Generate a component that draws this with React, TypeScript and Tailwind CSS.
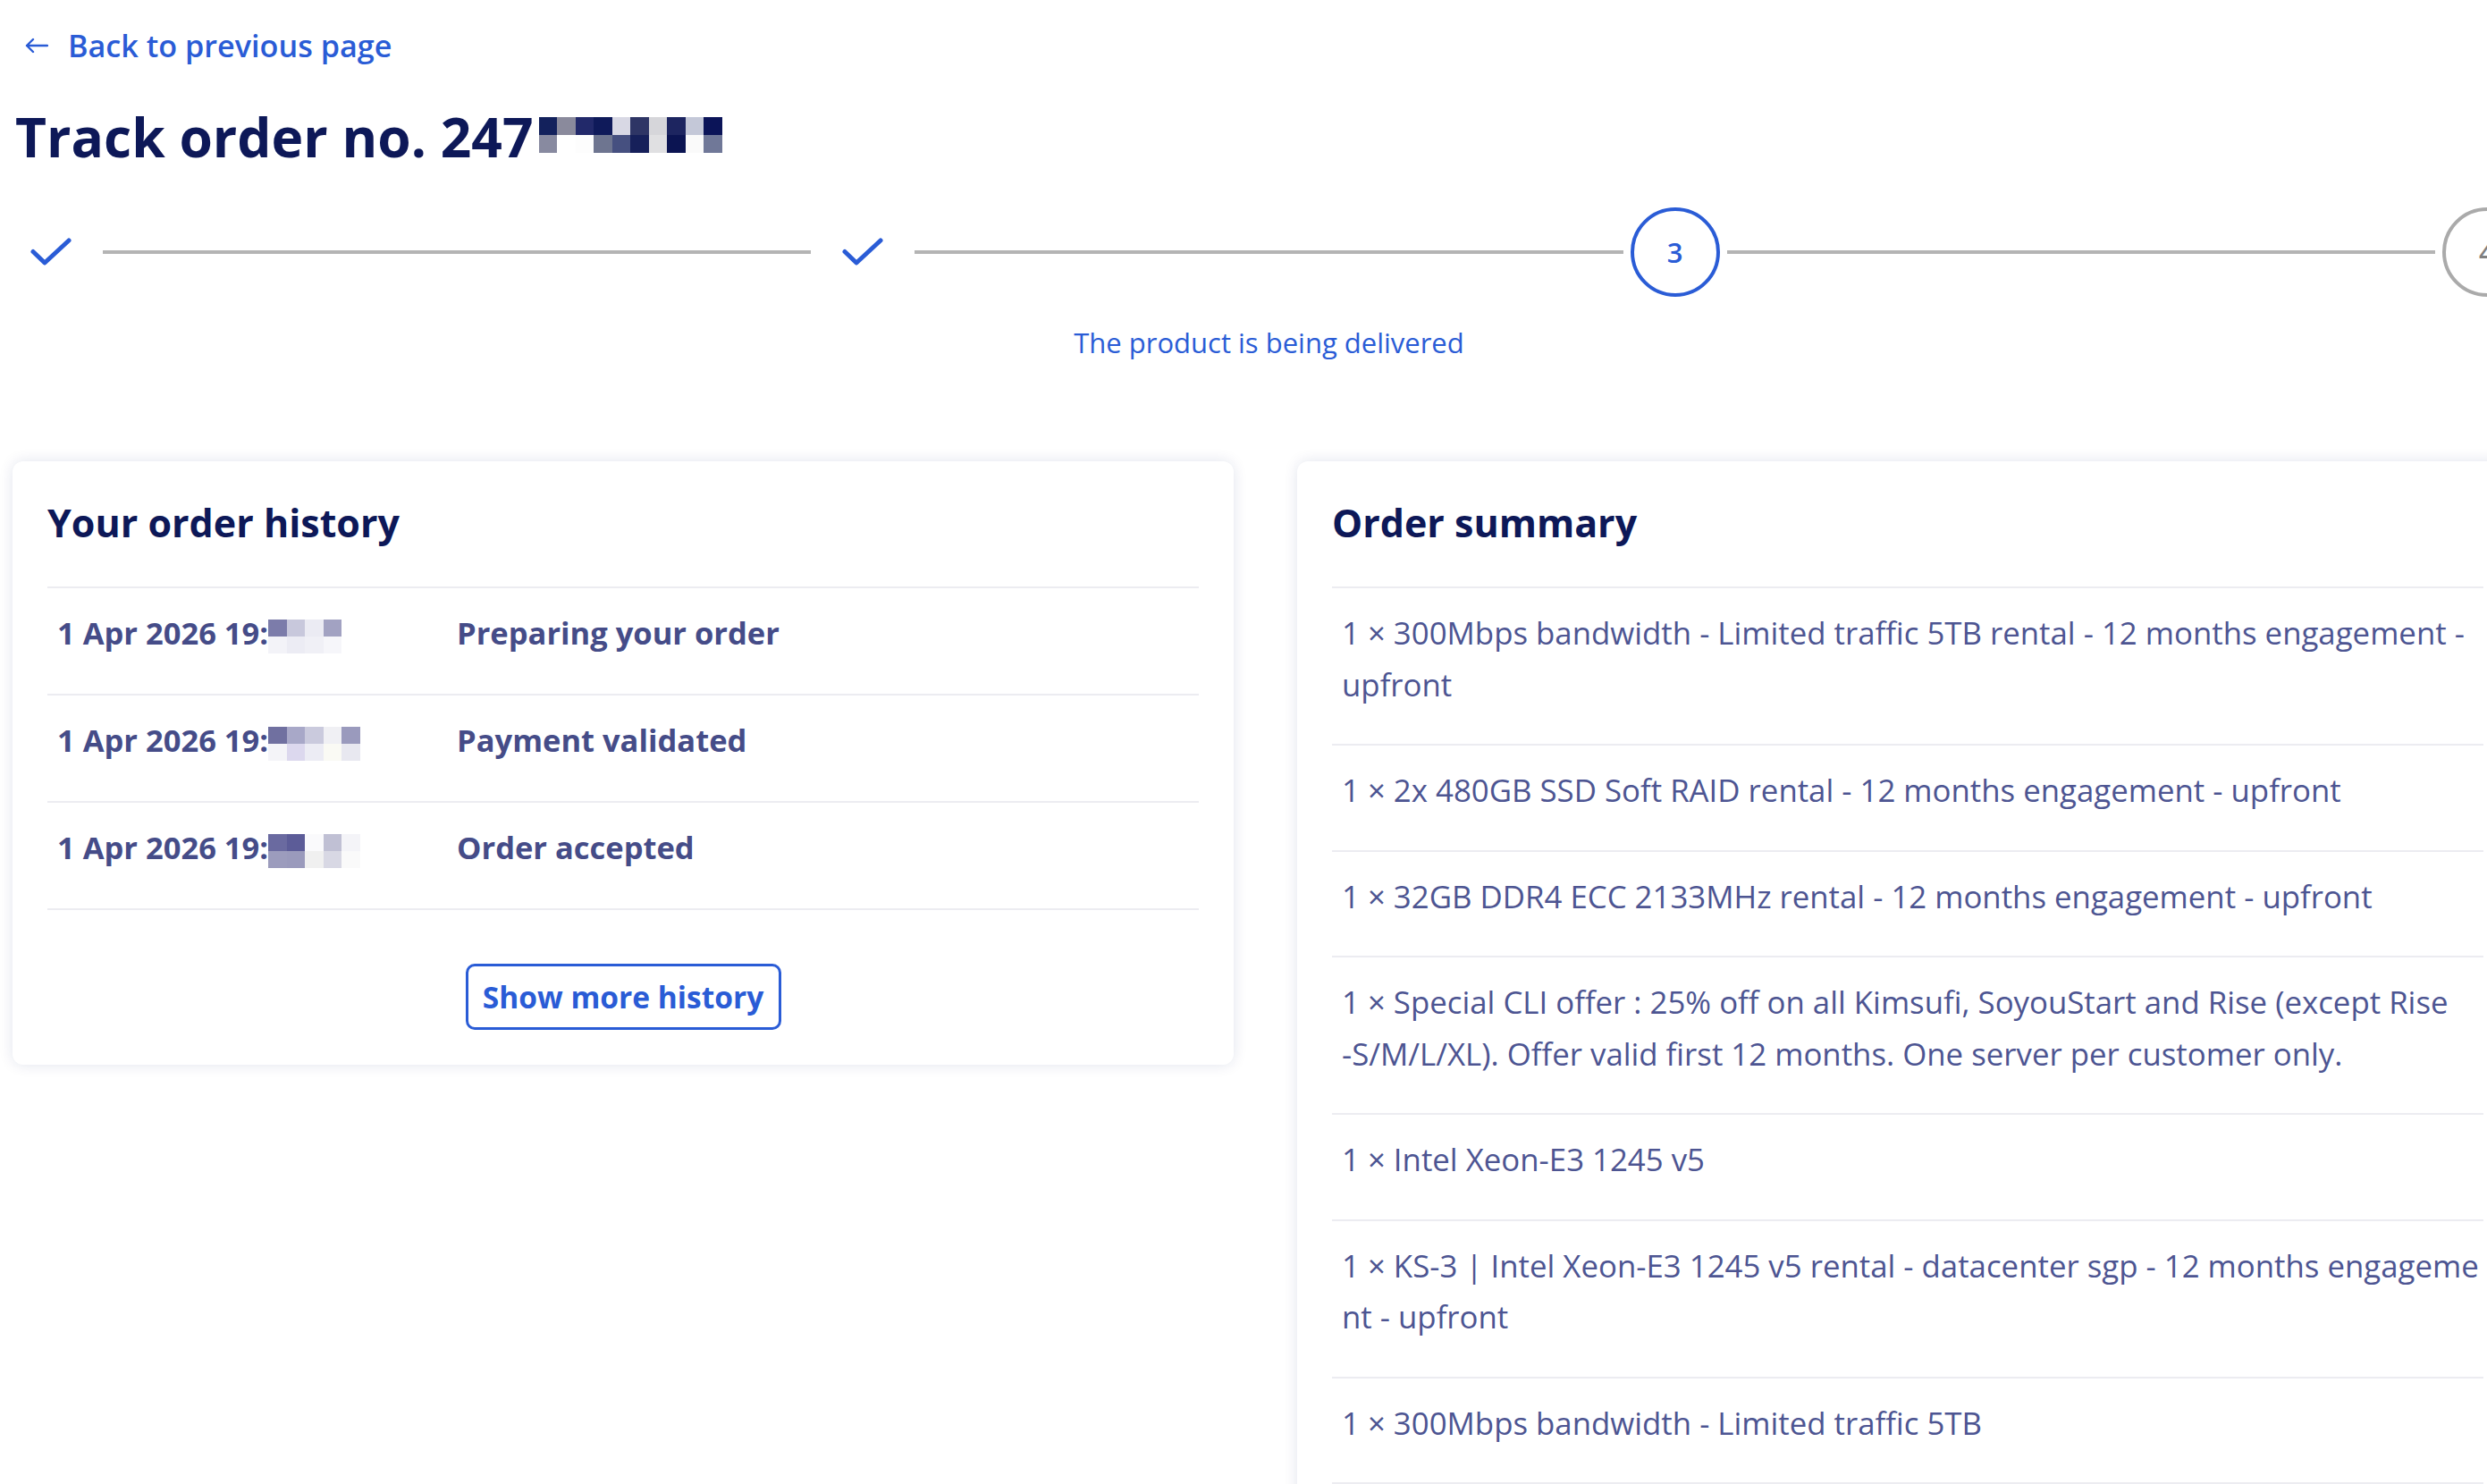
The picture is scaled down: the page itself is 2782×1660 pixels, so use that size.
import React from "react";

// mosaic cells used to mask the order number and the history times
const orderMask = [
  ["bg-[#13215c]", "bg-[#8a8a9c]", "bg-[#22296a]", "bg-[#0f1a5a]", "bg-[#d8d8e4]", "bg-[#2e3565]", "bg-[#d6d6da]", "bg-[#1d2560]", "bg-[#c4c8d8]", "bg-[#0b1458]"],
  ["bg-[#888aa0]", "bg-[#ffffff]", "bg-[#fdfdfd]", "bg-[#6e7590]", "bg-[#465080]", "bg-[#16205a]", "bg-[#e0e0e2]", "bg-[#0b1452]", "bg-[#fafafa]", "bg-[#707898]"],
];

const historyRows = [
  {
    status: "Preparing your order",
    mask: [
      ["bg-[#7c7caa]", "bg-[#c8c8dc]", "bg-[#ebebf3]", "bg-[#a2a2c2]"],
      ["bg-[#f3f3f8]", "bg-[#ececf4]", "bg-[#f0f0f6]", "bg-[#f6f6fa]"],
    ],
  },
  {
    status: "Payment validated",
    mask: [
      ["bg-[#7070a0]", "bg-[#a8a8c8]", "bg-[#cacadd]", "bg-[#f0f0f4]", "bg-[#9a9abd]"],
      ["bg-[#f4f4f8]", "bg-[#dcd8ee]", "bg-[#ececf4]", "bg-[#fafaf4]", "bg-[#e8e8f0]"],
    ],
  },
  {
    status: "Order accepted",
    mask: [
      ["bg-[#6a6aa0]", "bg-[#5c5c98]", "bg-[#fafafc]", "bg-[#c0c0d4]", "bg-[#f4f4f8]"],
      ["bg-[#9c9cbd]", "bg-[#9a9abc]", "bg-[#f0f0f0]", "bg-[#d8d8e4]", "bg-[#fafafa]"],
    ],
  },
];

// \u2060 keeps "-S/" together so the offer wraps before the dash
const summaryItems = [
  "1 × 300Mbps bandwidth - Limited traffic 5TB rental - 12 months engagement - upfront",
  "1 × 2x 480GB SSD Soft RAID rental - 12 months engagement - upfront",
  "1 × 32GB DDR4 ECC 2133MHz rental - 12 months engagement - upfront",
  "1 × Special CLI offer : 25% off on all Kimsufi, SoyouStart and Rise (except Rise -\u2060S\u2060/M/L/XL). Offer valid first 12 months. One server per customer only.",
  "1 × Intel Xeon-E3 1245 v5",
  "1 × KS-3 | Intel Xeon-E3 1245 v5 rental - datacenter sgp - 12 months engagement - upfront",
  "1 × 300Mbps bandwidth - Limited traffic 5TB",
];

const Mask: React.FC<{ rows: string[][]; cell: string }> = ({ rows, cell }) => (
  <div className="flex flex-col">
    {rows.map((row, i) => (
      <div key={i} className="flex">
        {row.map((c, j) => (
          <div key={j} className={`${cell} ${c}`} />
        ))}
      </div>
    ))}
  </div>
);

const StepLine = () => <div className="mx-[8px] h-[4px] flex-1 bg-[#b4b4b4]" />;

const StepDone = () => (
  <div className="flex h-[100px] w-[100px] shrink-0 items-center justify-center">
    <svg width="46" height="32" viewBox="0 0 46 32" fill="none">
      <path d="M3 15.5 L16 28 L43 3" stroke="#2a5cd6" strokeWidth="5" strokeLinecap="round" strokeLinejoin="round" />
    </svg>
  </div>
);

const StepCircle: React.FC<{ n: number; active?: boolean }> = ({ n, active }) => (
  <div
    className={`flex h-[100px] w-[100px] shrink-0 items-center justify-center rounded-full border-[4px] text-[31px] font-semibold ${
      active ? "border-[#2a5cd6] text-[#2a5cd6]" : "border-[#aaaaaa] text-[#808080]"
    }`}
  >
    {n}
  </div>
);

export default function App() {
  return (
    <div className="h-screen w-screen overflow-hidden bg-white font-['Open_Sans',sans-serif]">
      <div className="w-[2840px] pt-[27px]">
        {/* back link */}
        <a className="ml-[28px] flex h-[48px] items-center text-[34.2px] font-semibold text-[#2a5cd6]">
          <svg width="26" height="18" viewBox="0 0 26 18" fill="none" className="mr-[22px]">
            <path d="M25 9H2M9 2L2 9l7 7" stroke="#2a5cd6" strokeWidth="2.4" strokeLinecap="round" strokeLinejoin="round" />
          </svg>
          Back to previous page
        </a>

        <h1 className="ml-[17px] mt-[38px] flex h-[80px] items-center text-[60.5px] font-bold text-[#0d1858]">
          <span>Track order no. 247</span>
          <div className="ml-[6px] mt-[-4px]">
            <Mask rows={orderMask} cell="h-[20px] w-[20.5px]" />
          </div>
        </h1>

        {/* progress */}
        <div className="ml-[7px] mt-[39px] flex w-[2825px] items-center">
          <StepDone />
          <StepLine />
          <StepDone />
          <StepLine />
          <StepCircle n={3} active />
          <StepLine />
          <StepCircle n={4} />
        </div>
        <p className="ml-[7px] mt-[29px] w-[2825px] text-center text-[31px] leading-[44px] text-[#2a5cd6]">
          The product is being delivered
        </p>

        <div className="ml-[14px] mt-[111px] grid w-[2803px] grid-cols-2 items-start gap-[71px]">
          {/* history */}
          <section className="rounded-[12px] bg-white px-[39px] pb-[39px] pt-[39px] shadow-[0_0_16px_rgba(20,30,110,0.12)]">
            <h2 className="text-[43px] font-bold leading-[60px] text-[#0d1858]">Your order history</h2>
            <ul className="mt-[41px] border-b-2 border-[#ececf1]">
              {historyRows.map((row) => (
                <li
                  key={row.status}
                  className="flex border-t-2 border-[#ececf1] px-[11px] pb-[39px] pt-[21px] text-[34.5px] font-bold leading-[58px] text-[#454c88]"
                >
                  <div className="flex w-[447px] items-center">
                    <span>1 Apr 2026 19:</span>
                    <div className="mt-[8px]">
                      <Mask rows={row.mask} cell="h-[19px] w-[20.5px]" />
                    </div>
                  </div>
                  <span>{row.status}</span>
                </li>
              ))}
            </ul>
            <div className="mt-[60px] flex justify-center">
              <button className="flex h-[74px] w-[353px] items-center justify-center rounded-[10px] border-[3px] border-[#2a5cd6] text-[33.5px] font-bold text-[#2a5cd6]">
                Show more history
              </button>
            </div>
          </section>

          {/* summary */}
          <section className="rounded-[12px] bg-white px-[39px] pb-[39px] pt-[39px] shadow-[0_0_16px_rgba(20,30,110,0.12)]">
            <h2 className="text-[43px] font-bold leading-[60px] text-[#0d1858]">Order summary</h2>
            <ul className="mt-[41px] border-b-2 border-[#ececf1]">
              {summaryItems.map((item, i) => (
                <li
                  key={i}
                  className="break-all border-t-2 border-[#ececf1] pb-[38px] pl-[11px] pr-0 pt-[21px] text-[34.8px] leading-[57.5px] text-[#4d5592]"
                >
                  {item}
                </li>
              ))}
            </ul>
          </section>
        </div>
      </div>
    </div>
  );
}
